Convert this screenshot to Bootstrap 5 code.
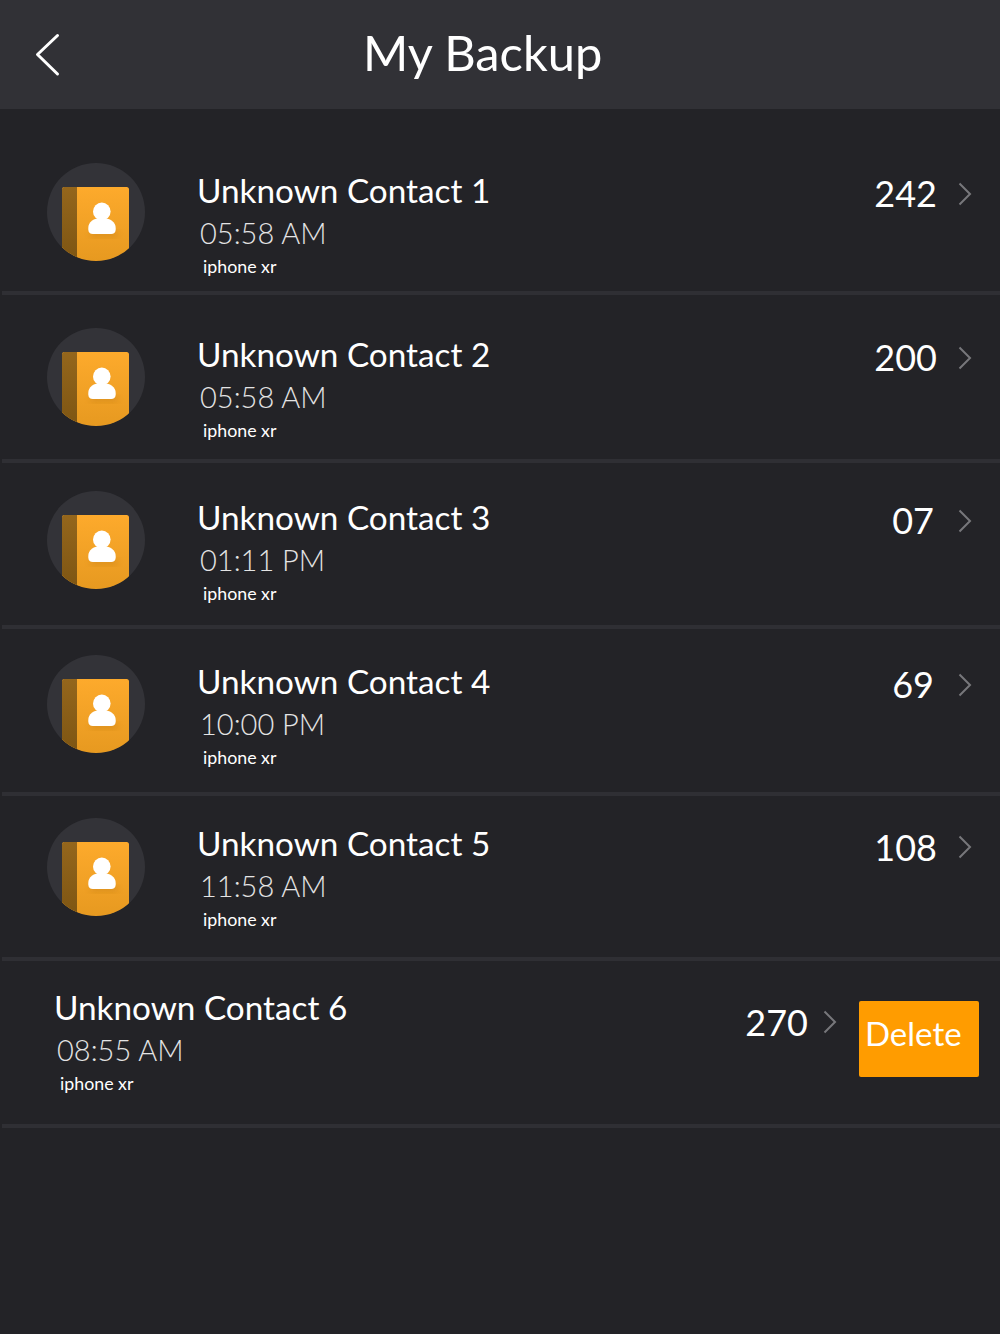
<!DOCTYPE html>
<html lang="en"><head><meta charset="utf-8"><title>My Backup</title>
<link href="https://cdn.jsdelivr.net/npm/bootstrap@5.3.0/dist/css/bootstrap.min.css" rel="stylesheet">
<style>
html,body{height:100%}
body{background:#232327;color:#fff;font-family:Lato,"Liberation Sans",sans-serif;overflow:hidden}
.topbar{height:109px;background:#313136;padding-left:34px}
.topbar h1{font-size:48.8px;font-weight:400;margin:0 0 6px 301px;line-height:102px}
.entry{border-bottom:4px solid #2f2f34;margin-left:2px;align-items:flex-start}
.e1{height:186px;padding-top:54px}
.e2{height:168px;padding-top:33px}
.e3{height:166px;padding-top:28px}
.e4{height:167px;padding-top:26px}
.e5{height:165px;padding-top:22px}
.e6{height:167px;padding-top:0}
.disc{width:98px;height:98px;flex:none;margin-left:45px;margin-right:52px}
.txt{flex:1;min-width:0}
.ttl{font-size:33.3px;line-height:40px;margin-top:6px}
.e1 .ttl{margin-top:7px}
.e5 .ttl{margin-top:5px}
.e6 .ttl{margin-top:4px}
.tm{font-size:29px;font-weight:300;line-height:45px;color:#e4e4e4;margin-left:3px}
.dev{font-size:17.800px;line-height:24px;margin-left:6px;margin-top:-1px}
.qty{font-size:36px;line-height:44px;margin-top:7px}
.e1 .qty{margin-top:8px}
.two{margin-right:3px}
.chev{margin-left:20.500px;margin-right:28.500px;margin-top:18px;flex:none}
.e1 .chev{margin-top:19px}
.e5 .chev{margin-top:17px}
.del{width:120px;height:76px;background:#ff9c00;color:#fff;font-size:33px;line-height:64px;border:0;border-radius:2px;padding:0 0 14px 6px;text-align:left;margin:40px 21px 0 22px;flex:none}
.del:hover{background:#ff9c00;color:#fff}
.e6 .txt{margin-left:52px;padding-top:22px}
.e6 .qty{margin-top:39px}
.e6 .chev{margin:49px 0 0 15px}
</style></head><body>
<svg width="0" height="0" class="d-block"><defs>
<clipPath id="dc"><circle cx="49" cy="49" r="49"/></clipPath>
<linearGradient id="og" x1="0" y1="0" x2="0" y2="1"><stop offset="0" stop-color="#fdaa2c"/><stop offset="1" stop-color="#e5981f"/></linearGradient>
<linearGradient id="sp" x1="0" y1="0" x2="0" y2="1"><stop offset="0" stop-color="#94661c"/><stop offset="1" stop-color="#7c5412"/></linearGradient>
<filter id="bl" x="-30%" y="-30%" width="160%" height="160%"><feGaussianBlur stdDeviation="3"/></filter>
<g id="ic">
<circle cx="49" cy="49" r="49" fill="#333338"/>
<g clip-path="url(#dc)">
<rect x="15" y="24" width="67" height="80" rx="2.500" fill="url(#og)"/>
<path d="M17.500 24H30V104H15V26.500A2.500 2.500 0 0 1 17.500 24Z" fill="url(#sp)"/>
<rect x="44" y="68" width="26" height="6" fill="#b87410" opacity=".35" filter="url(#bl)"/>
</g>
<ellipse cx="54.800" cy="48.500" rx="8.800" ry="9" fill="#fff"/>
<path d="M41.300 65c0-6 5-10 13.500-10s13.900 4 13.900 10v1.500c0 3-2 4.500-4.500 4.500H45.800c-2.500 0-4.500-1.500-4.500-4.500z" fill="#fff"/>
</g>
<path id="cv" d="M1.500 1.500 12 12 1.500 22.500" fill="none" stroke="#77777b" stroke-width="2"/>
</defs></svg>
<header class="topbar d-flex align-items-center">
<svg width="28" height="44" viewBox="0 0 28 44" fill="none"><path d="M23.500 2.500 3.500 21.500 23.500 41" stroke="#fff" stroke-width="3" stroke-linecap="round" stroke-linejoin="round"/></svg>
<h1>My Backup</h1>
</header>
<main>
<div class="entry e1 d-flex"><svg class="disc" viewBox="0 0 98 98"><use href="#ic"/></svg><div class="txt"><div class="ttl">Unknown Contact 1</div><div class="tm">05:58 AM</div><div class="dev">iphone xr</div></div><div class="qty">242</div><svg class="chev" width="14" height="24"><use href="#cv"/></svg></div>
<div class="entry e2 d-flex"><svg class="disc" viewBox="0 0 98 98"><use href="#ic"/></svg><div class="txt"><div class="ttl">Unknown Contact 2</div><div class="tm">05:58 AM</div><div class="dev">iphone xr</div></div><div class="qty">200</div><svg class="chev" width="14" height="24"><use href="#cv"/></svg></div>
<div class="entry e3 d-flex"><svg class="disc" viewBox="0 0 98 98"><use href="#ic"/></svg><div class="txt"><div class="ttl">Unknown Contact 3</div><div class="tm">01:11 PM</div><div class="dev">iphone xr</div></div><div class="qty two">07</div><svg class="chev" width="14" height="24"><use href="#cv"/></svg></div>
<div class="entry e4 d-flex"><svg class="disc" viewBox="0 0 98 98"><use href="#ic"/></svg><div class="txt"><div class="ttl">Unknown Contact 4</div><div class="tm">10:00 PM</div><div class="dev">iphone xr</div></div><div class="qty two">69</div><svg class="chev" width="14" height="24"><use href="#cv"/></svg></div>
<div class="entry e5 d-flex"><svg class="disc" viewBox="0 0 98 98"><use href="#ic"/></svg><div class="txt"><div class="ttl">Unknown Contact 5</div><div class="tm">11:58 AM</div><div class="dev">iphone xr</div></div><div class="qty">108</div><svg class="chev" width="14" height="24"><use href="#cv"/></svg></div>
<div class="entry e6 d-flex"><div class="txt"><div class="ttl">Unknown Contact 6</div><div class="tm">08:55 AM</div><div class="dev">iphone xr</div></div><div class="qty">270</div><svg class="chev" width="14" height="24"><use href="#cv"/></svg><button class="del btn" type="button">Delete</button></div>
</main>
</body></html>
